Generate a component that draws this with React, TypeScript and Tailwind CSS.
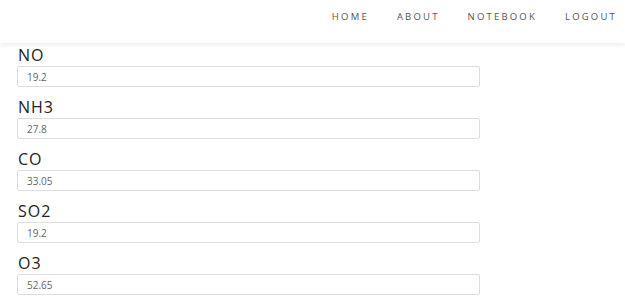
const fields = [
  { label: 'NO', value: '19.2' },
  { label: 'NH3', value: '27.8' },
  { label: 'CO', value: '33.05' },
  { label: 'SO2', value: '19.2' },
  { label: 'O3', value: '52.65' },
]

export default function App(): React.JSX.Element {
  return (
    <div className="min-h-screen bg-white font-['Open_Sans',sans-serif]">
      {/* Navbar */}
      <nav className="relative z-10 flex h-[43px] items-start justify-end bg-white pr-[8px] pt-[10px] shadow-[0_2px_5px_rgba(0,0,0,0.08)]">
        <ul className="flex gap-[28px] text-[9.5px] tracking-[2.2px] text-[#555]">
          <li>HOME</li>
          <li>ABOUT</li>
          <li>NOTEBOOK</li>
          <li>LOGOUT</li>
        </ul>
      </nav>

      {/* Form fields */}
      <div className="w-[480px] pl-[17px] pt-[1px]">
        {fields.map((f) => (
          <div key={f.label} className="mb-[9px]">
            <label className="block pl-[1px] text-[16px] leading-[22px] tracking-[1px] text-[#222]">{f.label}</label>
            <input
              readOnly
              value={f.value}
              className="block h-[21px] w-full rounded-[2px] border border-[#ddd] px-[9px] text-[10px] text-[#666] outline-none"
            />
          </div>
        ))}
      </div>
    </div>
  )
}
